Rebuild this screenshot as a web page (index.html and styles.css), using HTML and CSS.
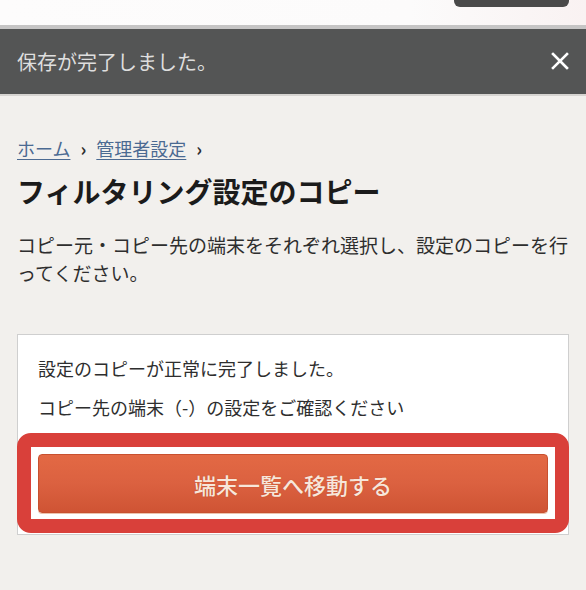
FILE: index.html
```html
<!DOCTYPE html>
<html lang="ja">
<head>
<meta charset="utf-8">
<title>フィルタリング設定のコピー</title>
<link rel="stylesheet" href="styles.css">
</head>
<body>
<header class="topbar">
  <span class="topbar-btn"></span>
</header>
<div class="toast">
  <span class="toast-text">保存が完了しました。</span>
  <svg class="toast-close" width="18" height="18" viewBox="0 0 18 18" aria-label="閉じる">
    <path d="M2 2 L16 16 M16 2 L2 16" stroke="#ffffff" stroke-width="2.6" stroke-linecap="square" fill="none"/>
  </svg>
</div>
<main class="main">
  <nav class="crumbs">
    <a class="crumb-link" href="#">ホーム</a><span class="crumb-sep">›</span><a class="crumb-link" href="#">管理者設定</a><span class="crumb-sep">›</span>
  </nav>
  <h1 class="title">フィルタリング設定のコピー</h1>
  <p class="desc">コピー元・コピー先の端末をそれぞれ選択し、設定のコピーを行ってください。</p>
  <section class="card">
    <p class="card-text">設定のコピーが正常に完了しました。</p>
    <p class="card-text second">コピー先の端末（-）の設定をご確認ください</p>
    <div class="highlight">
      <a class="btn" href="#">端末一覧へ移動する</a>
    </div>
  </section>
</main>
</body>
</html>
```

FILE: styles.css
```css
html, body {
  margin: 0;
  padding: 0;
}
body {
  background: #f2f0ed;
  font-family: "Noto Sans CJK JP", "Noto Sans", sans-serif;
  color: #2e2e2e;
  width: 586px;
  height: 590px;
  overflow: hidden;
}
.topbar {
  height: 25px;
  background: linear-gradient(90deg, #fdfcfc 0%, #fcfbfb 70%, #f9f2f2 100%);
  border-bottom: 4px solid #c6c5c5;
  display: flex;
  justify-content: flex-end;
  align-items: flex-start;
  padding-right: 17px;
}
.topbar-btn {
  display: block;
  width: 115px;
  height: 7px;
  background: #4a4a4a;
  border-radius: 0 0 6px 6px;
}
.toast {
  height: 65px;
  background: #545555;
  border-bottom: 2px solid #d6d4d1;
  display: flex;
  align-items: center;
  justify-content: space-between;
  padding: 0 17px 0 17px;
}
.toast-text {
  color: #dedede;
  font-size: 20px;
  line-height: 1;
}
.toast-close {
  display: block;
  margin-top: -2px;
}
.main {
  padding: 40px 17px 0 17px;
}
.crumbs {
  font-size: 18px;
  line-height: 24px;
  height: 24px;
}
.crumb-link {
  color: #4b6a92;
  text-decoration: underline;
  text-underline-offset: 3px;
  text-decoration-thickness: 1px;
}
.crumb-sep {
  color: #2e2e2e;
  margin: 0 10px;
  font-size: 18px;
  font-weight: 700;
}
.title {
  margin: 13px 0 0 0;
  font-size: 28px;
  line-height: 36px;
  font-weight: 700;
  color: #1b1b1b;
}
.desc {
  margin: 22px 0 0 0;
  font-size: 19px;
  line-height: 28px;
  color: #2e2e2e;
}
.card {
  margin-top: 47px;
  background: #ffffff;
  border: 1px solid #cfcfcf;
  padding: 21px 0 1px 0;
}
.card-text {
  margin: 0;
  padding-left: 20px;
  font-size: 18px;
  line-height: 24px;
  color: #2e2e2e;
}
.card-text.second {
  margin-top: 15px;
}
.highlight {
  margin: 14px -1px 0 -1px;
  border: 14px solid #d9403a;
  border-radius: 14px;
  background: #ffffff;
  padding: 7px 7px 6px 7px;
}
.btn {
  display: flex;
  align-items: center;
  justify-content: center;
  height: 57px;
  border: 1px solid #c8502f;
  border-radius: 4px;
  background: linear-gradient(180deg, #e36944 0%, #db6140 50%, #cf5434 100%);
  box-shadow: 0 1px 0 #ecc2ad;
  color: #f8e6da;
  font-size: 22px;
  font-weight: 500;
  text-decoration: none;
  text-shadow: 0 0 1px rgba(120, 40, 20, 0.4);
}
```
